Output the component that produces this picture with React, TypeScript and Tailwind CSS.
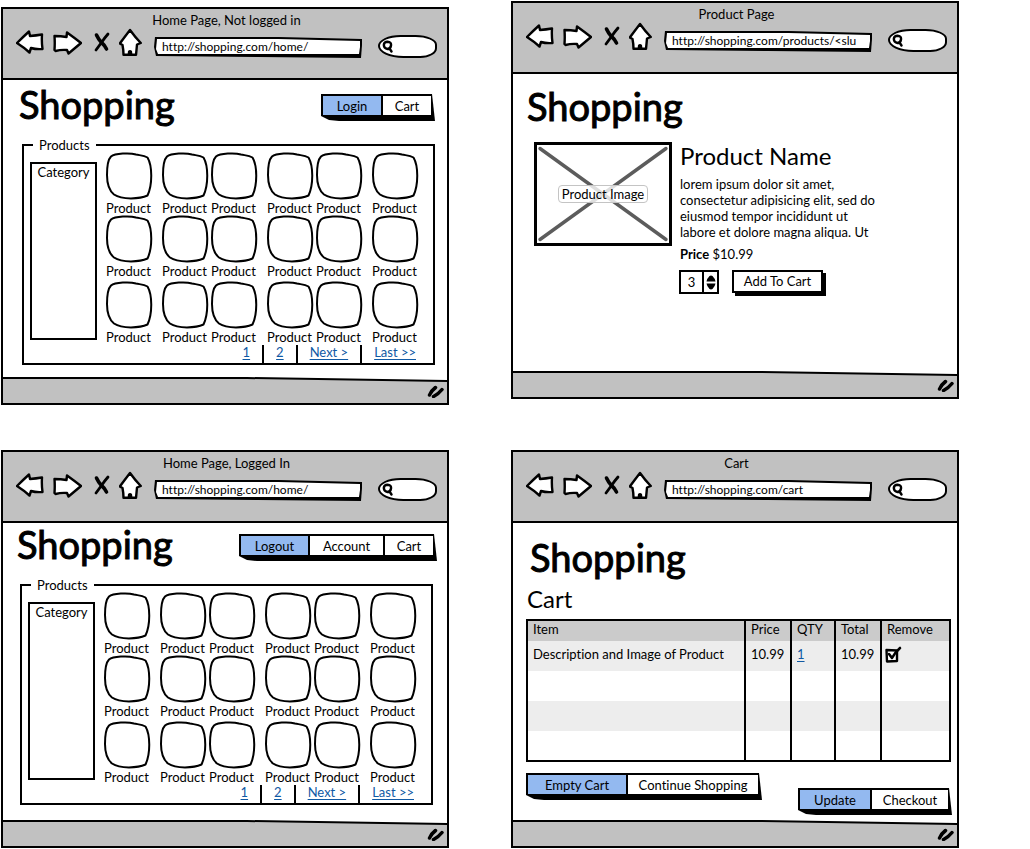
import React from "react";
import type { ReactNode } from "react";

function NavIcons() {
  const line = {
    fill: "white",
    stroke: "black",
    strokeWidth: 2.4,
    strokeLinejoin: "round" as const,
    strokeLinecap: "round" as const,
  };
  return (
    <>
      <button type="button" aria-label="Back" className="mr-[9px] shrink-0">
        <svg width="28" height="26" viewBox="16 29 28 26" className="block">
          <path {...line} d="M17 43 Q23 37 29 31.500 L30 36 Q36 35.500 42 34.500 Q41.500 42 42.500 49 Q36 49.500 31 48 L29.500 52.500 Q24 47.500 17 43Z" />
        </svg>
      </button>
      <button type="button" aria-label="Forward" className="mr-[11px] shrink-0">
        <svg width="29" height="26" viewBox="53 29 29 26" className="block">
          <path {...line} d="M54.500 36 Q61 36 66.500 37 L67 32.500 Q74 37.500 81 43 L68.500 53.500 L67 50 Q61 49.500 55.500 51 L54.500 50 Q55 43 54.500 36Z" />
        </svg>
      </button>
      <button type="button" aria-label="Stop" className="mr-[9px] shrink-0">
        <svg width="17" height="26" viewBox="93 29 17 26" className="block">
          <path d="M96.500 35 Q98 38.500 101.500 42.500 Q104.500 45 106.500 49" fill="none" stroke="black" strokeWidth="3.600" strokeLinecap="round" />
          <path d="M108 34 Q104.500 38 101.500 42.500 Q99 46 96 50" fill="none" stroke="black" strokeWidth="2.800" strokeLinecap="round" />
        </svg>
      </button>
      <button type="button" aria-label="Home" className="mr-3 shrink-0">
        <svg width="23" height="28" viewBox="119 28 23 28" className="-mt-px block">
          <path {...line} d="M130 30 Q135 37 140.800 43 L137 44.500 Q136.500 50 136 54.800 L123.500 54.800 Q123.500 50 122.500 45 L119.800 43.500 Q125 36.500 130 30Z" />
          <path d="M127.500 55 L128 51 Q130 49 132 51 L132.500 55Z" fill="black" />
        </svg>
      </button>
    </>
  );
}

function BrowserWindow({ id, title, url, children }: { id: string; title: string; url: string; children: ReactNode }) {
  return (
    <section className="flex min-h-[398px] flex-col border-2 border-black bg-white">
      <header className="h-[71px] border-b-2 border-black bg-[#c1c1c1] pl-[13px] pr-[10px] pt-[3px]">
        <h2 className="text-center text-[13px] leading-4">{title}</h2>
        <div className="mt-px flex items-start">
          <NavIcons />
          <div className="mt-2 h-[21px] min-w-0 flex-1 bg-black p-[2px] [clip-path:polygon(1px_0,60%_0,100%_2px,100%_8px,calc(100%-1px)_100%,50%_20px,2px_19px,0_10px)]">
            <label htmlFor={id + "-url"} className="sr-only">Address</label>
            <div className="bg-white [clip-path:polygon(1px_0,60%_0,100%_2px,100%_8px,calc(100%-1px)_100%,50%_16px,2px_15px,0_10px)]">
              <input
                id={id + "-url"}
                type="text"
                defaultValue={url}
                className="mb-[2px] block h-[15px] w-full bg-transparent px-[6px] text-[12px] leading-[15px] outline-none"
              />
            </div>
          </div>
          <div className="ml-4 mt-[6px] flex h-[23px] w-[59px] items-center rounded-[40%_38%_30%_45%/50%_45%_45%_55%] border-2 border-black bg-white pl-[2px]">
            <svg width="11" height="13" viewBox="0 0 11 13" className="shrink-0">
              <path d="M1.800 5 Q2 1.800 5.500 1.700 Q9.500 2 9 5.500 Q8.500 8.800 5.500 9 Q2 8.500 1.800 5Z M7.500 8.500 L9.500 11.500" fill="none" stroke="black" strokeWidth="2.400" strokeLinecap="round" />
            </svg>
            <input aria-label="Search" type="text" className="w-full min-w-0 bg-transparent text-[13px] outline-none" />
          </div>
        </div>
      </header>
      <div className="flex-1 pl-px">{children}</div>
      <footer className="bg-black [clip-path:polygon(0_0,55%_0,100%_3px,100%_100%,0_100%)]">
        <div className="mt-[2px] flex h-6 items-center justify-end bg-[#c1c1c1] pr-[3px] [clip-path:polygon(0_0,55%_0,100%_3px,100%_100%,0_100%)]">
          <svg width="17" height="14" viewBox="0 0 17 14">
            <path d="M2.500 11 Q4 7 8.500 3.500 M6.500 12.500 Q11 10.500 15 5.500" fill="none" stroke="black" strokeWidth="3.500" strokeLinecap="round" />
          </svg>
        </div>
      </footer>
    </section>
  );
}

function Brand() {
  return <h1 className="text-[38px] leading-[48px] [-webkit-text-stroke:1px_black]">Shopping</h1>;
}

function ButtonBar({ items }: { items: { label: string; size: string }[] }) {
  return (
    <div className="flex gap-[2px] bg-black pb-[6px] pl-[2px] pr-[4px] pt-[2px] [clip-path:polygon(0_0,calc(100%-3px)_0,100%_100%,18px_100%,8px_calc(100%-1px),0_calc(100%-5px))]">
      {items.map((item, i) => (
        <button
          key={item.label}
          type="button"
          className={"h-[19px] whitespace-nowrap text-center text-[13px] leading-5 " + item.size + (i === 0 ? " bg-[#93b9f0]" : " bg-white")}
        >
          {item.label}
        </button>
      ))}
    </div>
  );
}

function Tile() {
  return (
    <a href="#product" className="block">
      <svg width="47" height="48" viewBox="0 0 47 48" className="block">
        <path
          d="M5 4.500 C9 1.200 24 .6 30 2.500 C35 3.500 38 3.500 41.500 5.500 C46.500 14 46.500 33 41.500 43.500 C34 47 16 48 8 42.500 C2.500 38 1 32 1 23 C1 15 2 7.500 5 4.500Z"
          fill="white"
          stroke="black"
          strokeWidth="2"
          strokeLinejoin="round"
        />
      </svg>
      <span className="-mb-px block pt-px text-[13px] leading-[15px]">Product</span>
    </a>
  );
}

const tileRow = [1, 2, 3, 4, 5, 6];

function TileRow() {
  return (
    <div className="grid grid-cols-[56fr_49fr_56fr_49fr_56fr_47fr]">
      {tileRow.map((n) => (
        <Tile key={n} />
      ))}
    </div>
  );
}

function ProductCatalogue() {
  return (
    <fieldset className="min-w-0 border-2 border-black">
      <legend className="ml-[9px] px-[6px] text-[13px] leading-[14px]">Products</legend>
      <div className="flex pl-[6px] pr-[14px]">
        <div className="mr-[9px] mt-[10px] h-[178px] w-[67px] shrink-0 border-2 border-black text-center text-[13px] leading-4">
          Category
        </div>
        <div className="min-w-0 flex-1">
          <TileRow />
          <TileRow />
          <div className="pt-[3px]">
            <TileRow />
          </div>
        </div>
      </div>
      <nav aria-label="Pages" className="mt-px flex justify-end divide-x-2 divide-black pr-[5px] text-[13px] leading-[14px] text-[#0f59a4]">
        {["1", "2", "Next >", "Last >>"].map((page) => (
          <div key={page} className="h-[18px] px-3">
            <a href="#page" className="underline underline-offset-2">{page}</a>
          </div>
        ))}
      </nav>
    </fieldset>
  );
}

function HomeSignedOut() {
  return (
    <div className="pl-[18px] pr-3">
      <div className="flex h-[58px] items-start justify-between">
        <div className="-ml-[3px]">
          <Brand />
        </div>
        <div className="pt-[14px]">
          <ButtonBar items={[{ label: "Login", size: "w-[58px]" }, { label: "Cart", size: "w-[48px]" }]} />
        </div>
      </div>
      <ProductCatalogue />
    </div>
  );
}

function HomeSignedIn() {
  return (
    <div className="pl-4 pr-[14px]">
      <div className="-mr-1 flex h-[55px] items-start justify-between">
        <div className="-ml-[3px] -mt-[3px]">
          <Brand />
        </div>
        <div className="pt-[11px]">
          <ButtonBar
            items={[
              { label: "Logout", size: "w-[67px]" },
              { label: "Account", size: "w-[73px]" },
              { label: "Cart", size: "w-[48px]" },
            ]}
          />
        </div>
      </div>
      <ProductCatalogue />
    </div>
  );
}

function ProductPage() {
  return (
    <div className="pl-3 pr-4">
      <div className="pl-px pt-2">
        <Brand />
      </div>
      <div className="flex items-start pl-2 pt-3">
        <figure className="grid h-[104px] w-[138px] shrink-0 border-[3px] border-black">
          <svg viewBox="0 0 132 98" className="col-start-1 row-start-1 h-full w-full">
            <path d="M3 3.500 L129 94.500 M129 3.500 L3 94.500" stroke="#5c5c5c" strokeWidth="3.400" strokeLinecap="round" />
          </svg>
          <figcaption className="col-start-1 row-start-1 self-center justify-self-center rounded border border-[#c4c4c4] bg-white/80 px-[3px] text-[13px] leading-4">
            Product Image
          </figcaption>
        </figure>
        <div className="ml-2 min-w-0 max-w-[210px]">
          <h3 className="text-[24px] leading-7">Product Name</h3>
          <p className="mt-[6px] text-[13px] leading-4">
            lorem ipsum dolor sit amet,
            <br />
            consectetur adipisicing elit, sed do
            <br />
            eiusmod tempor incididunt ut
            <br />
            labore et dolore magna aliqua. Ut
          </p>
          <p className="mt-[6px] text-[13px] leading-4">
            <strong>Price</strong> $10.99
          </p>
          <div className="-ml-px mt-2 flex items-start gap-[13px]">
            <div className="flex h-6 w-10 border-2 border-black">
              <label htmlFor="quantity" className="sr-only">Quantity</label>
              <input
                id="quantity"
                type="text"
                inputMode="numeric"
                defaultValue="3"
                className="h-5 w-[23px] border-r-2 border-black text-center text-[13px] leading-5 outline-none"
              />
              <div className="flex flex-1 flex-col items-center justify-center gap-px">
                <button type="button" aria-label="Increase">
                  <svg width="10" height="7" viewBox="0 0 10 7" className="block">
                    <path d="M.5 6.500 Q1 3.500 3.500 1 Q5 .2 6.500 1 Q9 3.500 9.500 6.500Z" fill="black" />
                  </svg>
                </button>
                <button type="button" aria-label="Decrease">
                  <svg width="10" height="7" viewBox="0 0 10 7" className="block">
                    <path d="M.5 .5 Q1 3.500 3.500 6 Q5 6.800 6.500 6 Q9 3.500 9.500 .5Z" fill="black" />
                  </svg>
                </button>
              </div>
            </div>
            <button
              type="button"
              className="h-[23px] w-[91px] whitespace-nowrap border-2 border-black bg-white text-[13px] leading-[19px] shadow-[3px_3px_0_0_#000]"
            >
              Add To Cart
            </button>
          </div>
        </div>
      </div>
    </div>
  );
}

const cell = "border-x-2 border-black pb-1 pl-[5px] text-left font-normal";

function CartPage() {
  return (
    <div className="pl-3 pr-[6px]">
      <div className="pl-1 pt-[10px]">
        <Brand />
      </div>
      <h3 className="mt-1 pl-px text-[24px] leading-7">Cart</h3>
      <table className="mt-[6px] w-full table-fixed border-collapse border-2 border-black text-[13px] leading-4">
        <colgroup>
          <col />
          <col className="w-[46px]" />
          <col className="w-[44px]" />
          <col className="w-[46px]" />
          <col className="w-[69px]" />
        </colgroup>
        <thead>
          <tr className="h-5 bg-[#cbcbcb]">
            <th className={cell}>Item</th>
            <th className={cell}>Price</th>
            <th className={cell}>QTY</th>
            <th className={cell}>Total</th>
            <th className={cell}>Remove</th>
          </tr>
        </thead>
        <tbody>
          <tr className="h-[30px] bg-[#ededed]">
            <td className={cell}>Description and Image of Product</td>
            <td className={cell}>10.99</td>
            <td className={cell}>
              <a href="#quantity" className="text-[#0f59a4] underline underline-offset-2">1</a>
            </td>
            <td className={cell}>10.99</td>
            <td className={cell}>
              <label className="-ml-[3px] grid w-[18px]">
                <input type="checkbox" defaultChecked aria-label="Remove item" className="col-start-1 row-start-1 h-[17px] w-[18px] appearance-none" />
                <svg width="18" height="17" viewBox="0 0 18 17" className="pointer-events-none col-start-1 row-start-1 block">
                  <path d="M2.500 4 L13 4.500 L13 15 L3 15.500Z" fill="white" stroke="black" strokeWidth="2.400" strokeLinejoin="round" />
                  <path d="M5 8 L8 12 Q11 6.500 16 2" fill="none" stroke="black" strokeWidth="2.600" strokeLinecap="round" strokeLinejoin="round" />
                </svg>
              </label>
            </td>
          </tr>
          {["bg-white", "bg-[#ededed]", "bg-white"].map((shade, i) => (
            <tr key={i} className={"h-[30px] " + shade}>
              <td className={cell} />
              <td className={cell} />
              <td className={cell} />
              <td className={cell} />
              <td className={cell} />
            </tr>
          ))}
        </tbody>
      </table>
      <div className="flex items-start justify-between pt-[11px]">
        <ButtonBar items={[{ label: "Empty Cart", size: "w-[98px]" }, { label: "Continue Shopping", size: "w-[130px]" }]} />
        <div className="-mr-px pt-[15px]">
          <ButtonBar items={[{ label: "Update", size: "w-[70px]" }, { label: "Checkout", size: "w-[76px]" }]} />
        </div>
      </div>
    </div>
  );
}

export default function App() {
  return (
    <main className="grid grid-cols-2 items-start gap-x-[62px] bg-white pl-px pr-[71px] font-['Lato',sans-serif] text-black [font-variant-ligatures:none]">
      <div className="flex flex-col gap-[45px] pt-[7px]">
        <BrowserWindow id="home-out" title="Home Page, Not logged in" url="http://shopping.com/home/">
          <HomeSignedOut />
        </BrowserWindow>
        <BrowserWindow id="home-in" title="Home Page, Logged In" url="http://shopping.com/home/">
          <HomeSignedIn />
        </BrowserWindow>
      </div>
      <div className="flex flex-col gap-[51px] pt-px">
        <BrowserWindow id="product" title="Product Page" url="http://shopping.com/products/<slu">
          <ProductPage />
        </BrowserWindow>
        <BrowserWindow id="cart" title="Cart" url="http://shopping.com/cart">
          <CartPage />
        </BrowserWindow>
      </div>
    </main>
  );
}
